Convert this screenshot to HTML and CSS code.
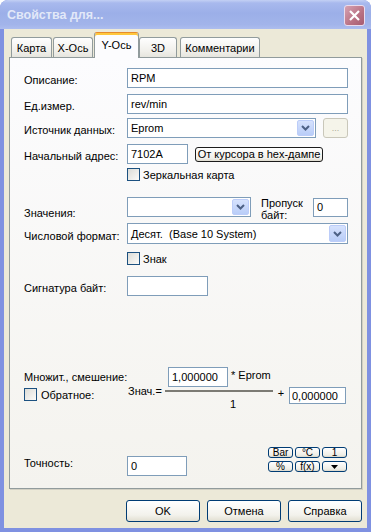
FILE: index.html
```html
<!DOCTYPE html>
<html lang="ru">
<head>
  <meta charset="UTF-8">
  <title>Свойства для...</title>
  <link rel="stylesheet" href="styles.css">
</head>
<body>
  <div class="window">
    <div class="titlebar">
      <span class="title">Свойства для...</span>
      <div class="close">
        <svg width="19" height="19" viewBox="0 0 19 19"><path d="M5 5 L14 14 M14 5 L5 14" stroke="#fff" stroke-width="2.2" fill="none"/></svg>
      </div>
    </div>

    <div class="client">
      <div class="tabs">
        <div class="tab t-map">Карта</div>
        <div class="tab t-x">X-Ось</div>
        <div class="tab t-y active">Y-Ось</div>
        <div class="tab t-3d">3D</div>
        <div class="tab t-com">Комментарии</div>
      </div>

      <div class="panel">
        <div class="row">
          <span class="lbl">Описание:</span>
          <input class="edit w-full" value="RPM">
        </div>
        <div class="row mt6">
          <span class="lbl">Ед.измер.</span>
          <input class="edit w-full" value="rev/min">
        </div>
        <div class="row mt4">
          <span class="lbl">Источник данных:</span>
          <div class="combo w-src"><span>Eprom</span><div class="drop"><svg width="9" height="6" viewBox="0 0 9 6"><path d="M1 1 L4.5 4.5 L8 1" stroke="#4d6185" stroke-width="2" fill="none"/></svg></div></div>
          <div class="btn-dots">...</div>
        </div>
        <div class="row mt6">
          <span class="lbl">Начальный адрес:</span>
          <input class="edit w-addr" value="7102A">
          <div class="btn-hex">От курсора в hex-дампе</div>
        </div>
        <div class="row mt4 indent">
          <span class="box"></span><span class="ctext">Зеркальная карта</span>
        </div>

        <div class="row row-vals mt16">
          <span class="lbl lbl-low">Значения:</span>
          <div class="combo w-val"><span></span><div class="drop"><svg width="9" height="6" viewBox="0 0 9 6"><path d="M1 1 L4.5 4.5 L8 1" stroke="#4d6185" stroke-width="2" fill="none"/></svg></div></div>
          <div class="skip">Пропуск<br>байт:</div>
          <input class="edit w-skip" value="0">
        </div>
        <div class="row mt6">
          <span class="lbl">Числовой формат:</span>
          <div class="combo w-full h21"><span>Десят.&nbsp; (Base 10 System)</span><div class="drop"><svg width="9" height="6" viewBox="0 0 9 6"><path d="M1 1 L4.5 4.5 L8 1" stroke="#4d6185" stroke-width="2" fill="none"/></svg></div></div>
        </div>
        <div class="row mt8 indent">
          <span class="box"></span><span class="ctext">Знак</span>
        </div>
        <div class="row mt11">
          <span class="lbl">Сигнатура байт:</span>
          <input class="edit w-sig" value="">
        </div>

        <div class="mult">
          <div class="mult-left">
            <div class="mult-title">Множит., смешение:</div>
            <div class="row inv">
              <span class="box"></span><span class="ctext">Обратное:</span>
            </div>
          </div>
          <span class="eq">Знач.=</span>
          <div class="frac">
            <div class="num">
              <input class="edit w-mul" value="1,000000">
              <span class="src">* Eprom</span>
            </div>
            <div class="frac-line"></div>
            <div class="den">1</div>
          </div>
          <span class="plus">+</span>
          <input class="edit w-off" value="0,000000">
        </div>

        <div class="prec">
          <span class="lbl prec-lbl">Точность:</span>
          <input class="edit w-prec" value="0">
          <div class="mini-grid">
            <div class="mini">Bar</div>
            <div class="mini">°C</div>
            <div class="mini">1</div>
            <div class="mini">%</div>
            <div class="mini">f(x)</div>
            <div class="mini"><svg width="7" height="4" viewBox="0 0 7 4"><path d="M0 0 H7 L3.5 4 Z" fill="#000"/></svg></div>
          </div>
        </div>
      </div>

      <div class="actions">
        <div class="btn">OK</div>
        <div class="btn">Отмена</div>
        <div class="btn">Справка</div>
      </div>
    </div>
  </div>
</body>
</html>
```

FILE: styles.css
```css
* {
  box-sizing: border-box;
}

body {
  margin: 0;
  background: #fff;
  font-family: "Liberation Sans", Arial, sans-serif;
  font-size: 11px;
  color: #000;
}

.window {
  width: 371px;
  height: 532px;
  display: flex;
  flex-direction: column;
  background: #7f91e1;
  border-radius: 8px 8px 0 0;
  overflow: hidden;
}

/* title bar (inactive XP look) */
.titlebar {
  height: 29px;
  flex: none;
  display: flex;
  align-items: flex-start;
  padding: 0 6px 0 7px;
  background: linear-gradient(#c3d0f4 0, #a8b9ed 3px, #9cafe8 45%, #a2b4ea 85%, #adbdee 100%);
}
.title {
  flex: 1;
  margin-top: 8px;
  font-weight: bold;
  font-size: 12.5px;
  color: #e2e8f8;
}
.close {
  width: 21px;
  height: 21px;
  margin-top: 5px;
  border: 1px solid #eadcec;
  border-radius: 3px;
  background: linear-gradient(135deg, #d6a2b2, #b97183 60%, #a65c70);
  display: flex;
  align-items: center;
  justify-content: center;
}

.client {
  flex: 1;
  margin: 0 4px 4px 4px;
  background: #ece9d8;
  display: flex;
  flex-direction: column;
}

/* tabs */
.tabs {
  height: 28px;
  flex: none;
  display: flex;
  align-items: flex-end;
  padding: 3px 0 0 7px;
  position: relative;
  z-index: 1;
}
.tab {
  height: 20px;
  border: 1px solid #919b9c;
  border-bottom: none;
  border-radius: 3px 3px 0 0;
  background: linear-gradient(#fefefe, #f0efea 70%, #e6e5de);
  text-align: center;
  padding-top: 4px;
}
.tab.active {
  height: 26px;
  margin-bottom: -1px;
  padding-top: 6px;
  background: #fcfcfe;
  border-top-color: #e68b2c;
  box-shadow: inset 0 2px 0 #ffc73c;
}
.t-map { width: 41px; }
.t-x { width: 40px; margin-left: 1px; }
.t-y { width: 45px; margin-left: 1px; }
.t-3d { width: 38px; }
.t-com { width: 80px; margin-left: 3px; }

/* tab page */
.panel {
  height: 432px;
  flex: none;
  margin: 0 5px;
  border: 1px solid #919b9c;
  background: linear-gradient(#fcfcfe, #f4f3ee);
  box-shadow: 1px 1px 0 #d2d0c3;
  padding: 10px 13px 12px 14px;
  display: flex;
  flex-direction: column;
}

.row {
  display: flex;
  align-items: center;
}
.mt4 { margin-top: 4px; }
.mt6 { margin-top: 6px; }
.mt8 { margin-top: 8px; }
.mt11 { margin-top: 11px; }
.mt16 { margin-top: 16px; }
.indent { padding-left: 103px; }
.row-vals { height: 20px; }

.lbl {
  width: 103px;
  flex: none;
  white-space: nowrap;
  padding-top: 4px;
}
.lbl-low { padding-top: 11px; }

.edit {
  height: 20px;
  border: 1px solid #7f9db9;
  background: #fff;
  padding: 0 3px;
  font-family: inherit;
  font-size: 11px;
  color: #000;
  outline: none;
  margin: 0;
}
.w-full { width: 221px; }
.w-addr { width: 61px; }
.w-skip { width: 35px; height: 19px; margin-left: auto; }
.w-sig { width: 81px; }
.w-mul { width: 60px; height: 20px; margin-left: 3px; }
.w-off { width: 57px; height: 17px; margin-top: 20px; padding-left: 2px; }
.w-prec { width: 60px; height: 20px; margin-top: 9px; }

.combo {
  height: 20px;
  border: 1px solid #7f9db9;
  background: #fff;
  display: flex;
  align-items: center;
  padding: 1px;
}
.combo span {
  flex: 1;
  padding-left: 2px;
  white-space: nowrap;
}
.combo.h21 { height: 21px; }
.w-src { width: 189px; }
.w-val { width: 124px; }
.drop {
  width: 17px;
  height: 100%;
  border: 1px solid #bccdf9;
  border-radius: 2px;
  background: linear-gradient(#d6e2fd, #b9cdf8);
  display: flex;
  align-items: center;
  justify-content: center;
}

.btn-dots {
  width: 25px;
  height: 20px;
  margin-left: 7px;
  border: 1px solid #c9c7ba;
  border-radius: 3px;
  background: #f5f4ea;
  color: #aca899;
  font-size: 9px;
  text-align: center;
  line-height: 18px;
}
.btn-hex {
  width: 128px;
  height: 15px;
  margin-left: 7px;
  border: 1px solid #1c1c1c;
  border-radius: 3px;
  background: linear-gradient(#ffffff, #f1f0ea 80%, #dedbcf);
  text-align: center;
  line-height: 13px;
  white-space: nowrap;
}

.box {
  width: 13px;
  height: 13px;
  flex: none;
  border: 1px solid #1c5180;
  background: linear-gradient(135deg, #dcdcd7, #fbfbf9);
}
.ctext {
  margin-left: 3px;
}

.skip {
  margin-left: 10px;
  margin-top: 3px;
  line-height: 12px;
}

/* multiplier / offset formula */
.mult {
  display: flex;
  align-items: flex-start;
  margin-top: 71px;
}
.mult-left {
  width: 104px;
  flex: none;
}
.mult-title {
  margin-top: 4px;
  white-space: nowrap;
}
.inv {
  margin-top: 5px;
}
.inv .ctext { margin-left: 4px; }
.eq {
  width: 37px;
  margin-top: 18px;
}
.frac {
  width: 108px;
}
.num {
  display: flex;
  align-items: flex-start;
}
.src {
  margin-left: 3px;
  margin-top: 2px;
  white-space: nowrap;
}
.frac-line {
  height: 2px;
  margin-top: 3px;
  background: #7c7b74;
}
.den {
  margin-top: 6px;
  padding-left: 65px;
}
.plus {
  width: 16px;
  margin-top: 20px;
  text-align: center;
}

/* precision row */
.prec {
  margin-top: auto;
  display: flex;
  align-items: flex-start;
}
.prec-lbl {
  padding-top: 0;
  margin-top: 10px;
}
.mini-grid {
  margin-left: auto;
  margin-right: 1px;
  display: grid;
  grid-template-columns: 25px 25px 25px;
  grid-template-rows: 11px 11px;
  column-gap: 2px;
  row-gap: 3px;
}
.mini {
  border: 1px solid #003c74;
  border-radius: 3px;
  background: linear-gradient(#ffffff, #eeede5 80%, #d8d5c8);
  font-size: 10px;
  line-height: 9px;
  text-align: center;
  display: flex;
  align-items: center;
  justify-content: center;
}

/* dialog buttons */
.actions {
  flex: none;
  display: flex;
  justify-content: flex-end;
  gap: 7px;
  padding: 11px 5px 0 0;
}
.btn {
  width: 74px;
  height: 22px;
  border: 1px solid #003c74;
  border-radius: 3px;
  background: linear-gradient(#ffffff, #f3f2ec 70%, #e2dfd2);
  text-align: center;
  line-height: 20px;
}
```
